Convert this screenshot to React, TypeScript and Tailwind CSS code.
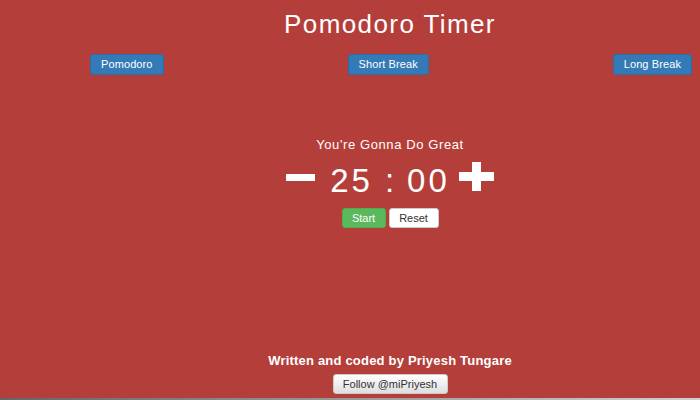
import React from 'react';

type Mode = 'pomodoro' | 'short' | 'long';

const modes: { id: Mode; label: string; minutes: number }[] = [
  { id: 'pomodoro', label: 'Pomodoro', minutes: 25 },
  { id: 'short', label: 'Short Break', minutes: 5 },
  { id: 'long', label: 'Long Break', minutes: 15 },
];

const pad = (n: number) => (n < 10 ? '0' + n : String(n));

const App = (): JSX.Element => {
  const [minutes, setMinutes] = React.useState(25);
  const [seconds, setSeconds] = React.useState(0);

  const pickMode = (m: number) => {
    setMinutes(m);
    setSeconds(0);
  };

  return (
    <div className="h-[400px] w-full flex flex-col font-['Liberation_Sans',Arial,sans-serif]">
      <div className="h-[398px] bg-[#b43e3a] text-white flex flex-col pl-[90px] pr-[10px]">
        <h1 className="pt-[9px] text-center text-[26px] leading-[30px] tracking-[1.4px] font-normal">
          Pomodoro Timer
        </h1>

        <div className="mt-[15px] -mr-[2px] flex justify-between">
          {modes.map((mode) => (
            <button
              key={mode.id}
              onClick={() => pickMode(mode.minutes)}
              className="h-[21px] px-[10px] rounded-[3px] bg-[#337ab7] border border-[#2e6da4] text-white text-[11px] leading-[13px] tracking-[0.1px]"
            >
              {mode.label}
            </button>
          ))}
        </div>

        <p className="mt-[62px] text-center text-[13px] leading-[16px] tracking-[0.6px]">
          You're Gonna Do Great
        </p>

        <div className="mt-[11px] flex justify-center items-start">
          <button
            onClick={() => setMinutes((m) => Math.max(1, m - 1))}
            className="mt-[10px] w-[29px] h-[7px] bg-white"
            aria-label="decrease"
          />
          <span className="ml-[15px] text-[33px] leading-[33px] tracking-[3px]">{pad(minutes)}</span>
          <span className="ml-[12px] text-[33px] leading-[33px]">:</span>
          <span className="ml-[13px] text-[33px] leading-[33px] tracking-[3px]">{pad(seconds)}</span>
          <button
            onClick={() => setMinutes((m) => m + 1)}
            className="ml-[9px] -mt-[2px] w-[35px] h-[29px]"
            aria-label="increase"
          >
            <svg width="35" height="29" viewBox="0 0 35 29">
              <rect x="0" y="10" width="35" height="9" fill="#fff" />
              <rect x="13" y="0" width="9" height="29" fill="#fff" />
            </svg>
          </button>
        </div>

        <div className="mt-[11px] flex justify-center gap-[3px]">
          <button className="w-[44px] h-[20px] rounded-[3px] bg-[#5cb85c] border border-[#4cae4c] text-white text-[11px] leading-[13px]">
            Start
          </button>
          <button
            onClick={() => pickMode(25)}
            className="w-[50px] h-[20px] rounded-[3px] bg-white border border-[#cccccc] text-[#333333] text-[11px] leading-[13px]"
          >
            Reset
          </button>
        </div>

        <div className="mt-auto pb-[4px] flex flex-col items-center">
          <p className="text-[13px] leading-[16px] font-bold tracking-[0.2px]">
            Written and coded by Priyesh Tungare
          </p>
          <button className="mt-[5px] w-[115px] h-[20px] rounded-[3px] border border-[#cccccc] bg-gradient-to-b from-white to-[#dedede] text-[#333333] text-[11px] leading-[13px]">
            Follow @miPriyesh
          </button>
        </div>
      </div>
      <div className="h-[2px] bg-gradient-to-r from-[#666666] via-[#9a9a9a] to-[#d0d0d0]" />
    </div>
  );
};

export default App;
